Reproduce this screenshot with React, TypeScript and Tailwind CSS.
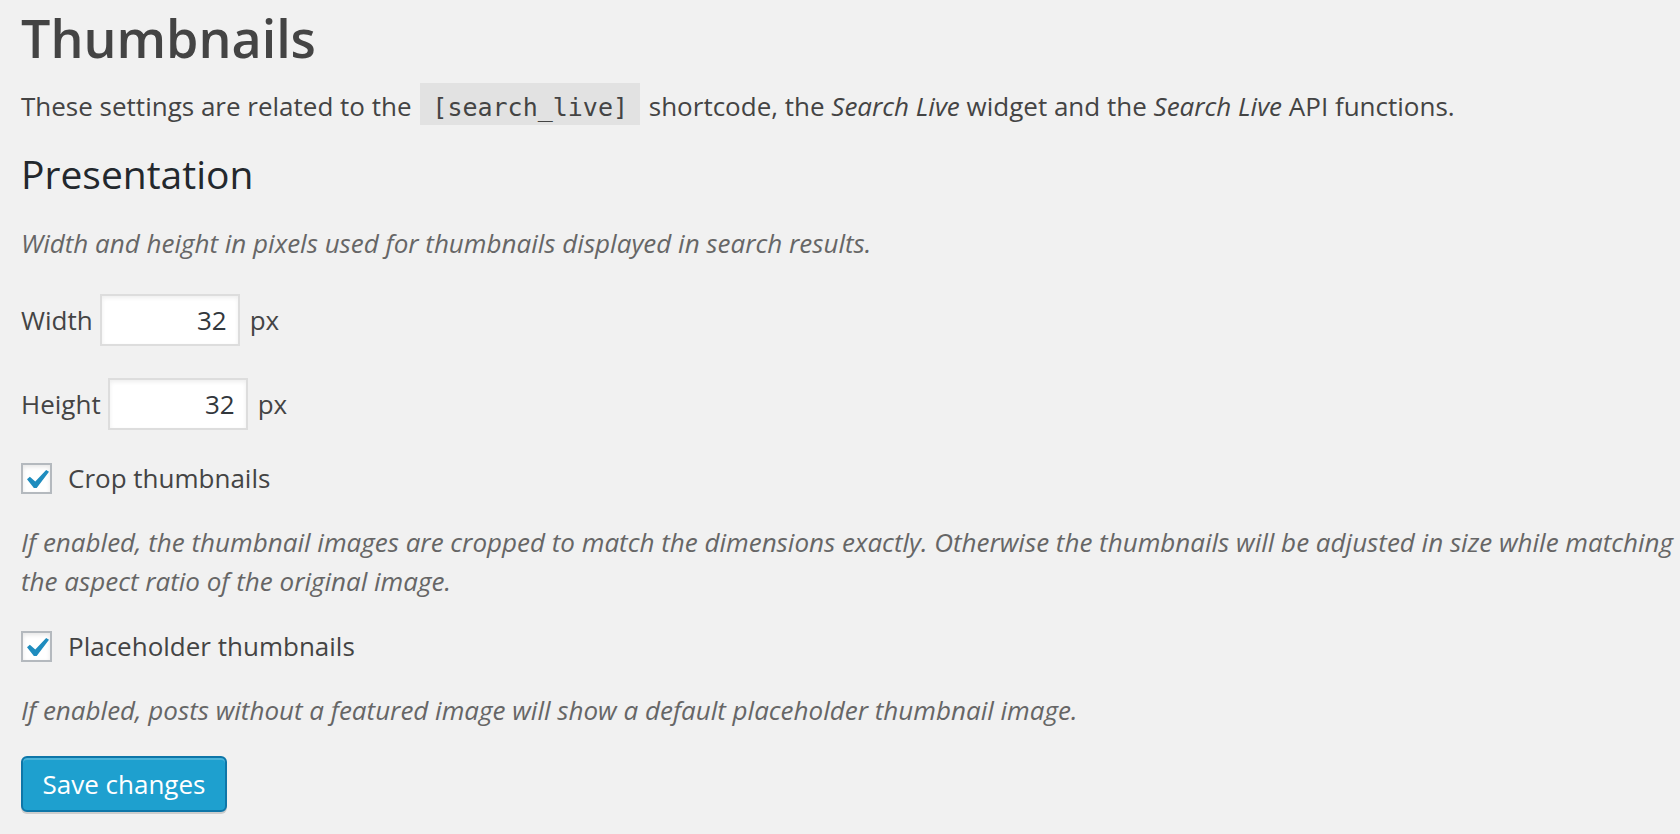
import React from "react";

const Check = () => (
  <svg
    width="22"
    height="18"
    viewBox="5.78 4.89 10.39 9.32"
    preserveAspectRatio="none"
    className="ml-[2px]"
  >
    <path
      d="M14.83 4.89l1.34.94-5.81 8.38H9.02L5.78 9.67l1.34-1.25 2.57 2.4z"
      fill="#1e8cbe"
    />
  </svg>
);

const Checkbox = ({ label }: { label: string }) => (
  <div className="flex h-[39px] items-center">
    <span className="flex h-[31px] w-[31px] items-center justify-center border-2 border-[#b4b9be] bg-white shadow-[inset_0_2px_4px_rgba(0,0,0,0.1)]">
      <Check />
    </span>
    <span className="ml-[16px]">{label}</span>
  </div>
);

const SizeField = ({ label, value }: { label: string; value: string }) => (
  <div className="flex h-[52px] items-center">
    <label>{label}</label>
    <input
      type="text"
      readOnly
      value={value}
      className="ml-[7px] h-[52px] w-[140px] border-2 border-[#dddddd] bg-white pr-[11px] text-right text-[26px] text-[#32373c] shadow-[inset_0_2px_4px_rgba(0,0,0,0.07)] outline-none"
    />
    <span className="ml-[10px]">px</span>
  </div>
);

const App = () => {
  return (
    <div className="min-h-screen bg-[#f1f1f1] pl-[21px] pt-[8px] font-['Open_Sans',sans-serif] text-[26px] leading-[39px] text-[#444]">
      <h1 className="text-[52px] font-semibold leading-[60px] text-[#444]">
        Thumbnails
      </h1>

      <p className="mt-[19px]">
        These settings are related to the{" "}
        <code className="mx-[2px] bg-[#e2e2e2] px-[12px] pb-[3px] pt-[10px] font-['DejaVu_Sans_Mono',monospace] text-[25px] text-[#444]">
          [search_live]
        </code>{" "}
        shortcode, the <em className="italic">Search Live</em> widget and the{" "}
        <em className="italic">Search Live</em> API functions.
      </p>

      {/* PRESENTATION */}
      <h3 className="mt-[23px] text-[39px] font-normal leading-[48px] text-[#23282d]">
        Presentation
      </h3>

      <p className="mt-[26px] italic text-[#666]">
        Width and height in pixels used for thumbnails displayed in search
        results.
      </p>

      <div className="mt-[31px]">
        <SizeField label="Width" value="32" />
      </div>
      <div className="mt-[32px]">
        <SizeField label="Height" value="32" />
      </div>

      <div className="mt-[29px]">
        <Checkbox label="Crop thumbnails" />
      </div>

      <p className="mt-[25px] italic text-[#666]">
        If enabled, the thumbnail images are cropped to match the dimensions
        exactly. Otherwise the thumbnails will be adjusted in size while
        matching the aspect ratio of the original image.
      </p>

      <div className="mt-[26px]">
        <Checkbox label="Placeholder thumbnails" />
      </div>

      <p className="mt-[25px] italic text-[#666]">
        If enabled, posts without a featured image will show a default
        placeholder thumbnail image.
      </p>

      {/* CTA */}
      <button className="mt-[26px] flex h-[56px] w-[206px] items-center justify-center rounded-[6px] border-2 border-[#0e76a8] bg-[#1ea0cf] text-[26px] text-white shadow-[inset_0_2px_0_rgba(120,200,230,0.5),0_2px_0_rgba(0,0,0,0.15)]">
        Save changes
      </button>
    </div>
  );
};

export default App;
